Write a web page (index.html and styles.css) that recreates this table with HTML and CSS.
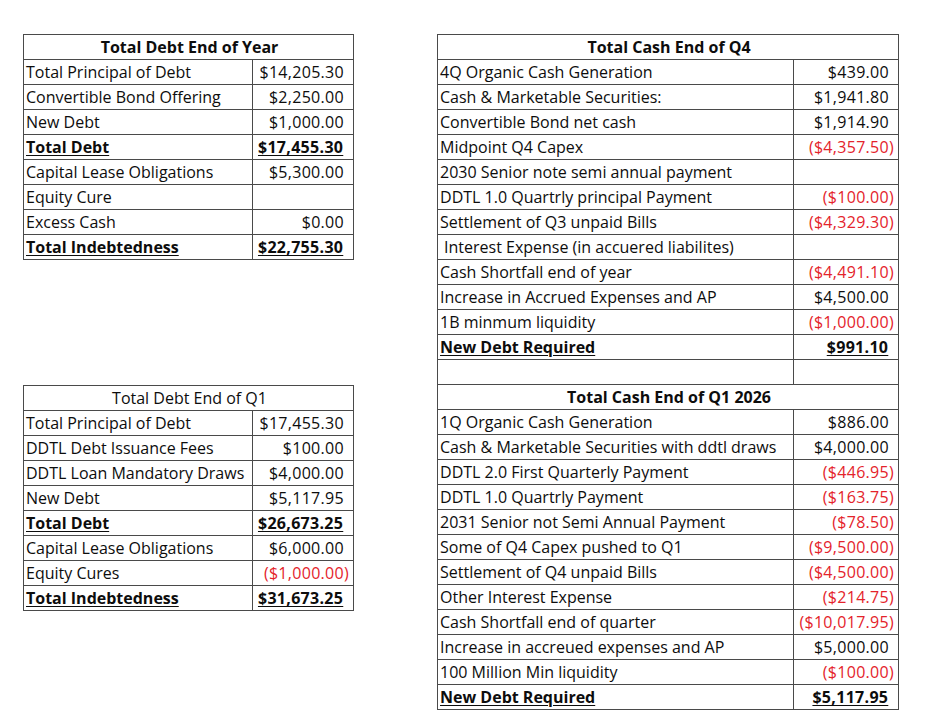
FILE: index.html
```html
<!DOCTYPE html>
<html>
<head>
<meta charset="utf-8">
<title>Debt and Cash Summary</title>
<link rel="stylesheet" href="styles.css">
</head>
<body>
<main class="page">
  <section class="left-col">
    <table class="sheet debt">
      <colgroup><col class="lbl"><col class="val"></colgroup>
      <tr><th colspan="2" class="head bold">Total Debt End of Year</th></tr>
      <tr><td>Total Principal of Debt</td><td class="num">$14,205.30<span class="pad">)</span></td></tr>
      <tr><td>Convertible Bond Offering</td><td class="num">$2,250.00<span class="pad">)</span></td></tr>
      <tr><td>New Debt</td><td class="num">$1,000.00<span class="pad">)</span></td></tr>
      <tr class="total"><td><u>Total Debt</u></td><td class="num"><u>$17,455.30</u><span class="pad">)</span></td></tr>
      <tr><td>Capital Lease Obligations</td><td class="num">$5,300.00<span class="pad">)</span></td></tr>
      <tr><td>Equity Cure</td><td class="num"></td></tr>
      <tr><td>Excess Cash</td><td class="num">$0.00<span class="pad">)</span></td></tr>
      <tr class="total"><td><u>Total Indebtedness</u></td><td class="num"><u>$22,755.30</u><span class="pad">)</span></td></tr>
    </table>

    <table class="sheet debt">
      <colgroup><col class="lbl"><col class="val"></colgroup>
      <tr><th colspan="2" class="head">Total Debt End of Q1</th></tr>
      <tr><td>Total Principal of Debt</td><td class="num">$17,455.30<span class="pad">)</span></td></tr>
      <tr><td>DDTL Debt Issuance Fees</td><td class="num">$100.00<span class="pad">)</span></td></tr>
      <tr><td>DDTL Loan Mandatory Draws</td><td class="num">$4,000.00<span class="pad">)</span></td></tr>
      <tr><td>New Debt</td><td class="num">$5,117.95<span class="pad">)</span></td></tr>
      <tr class="total"><td><u>Total Debt</u></td><td class="num"><u>$26,673.25</u><span class="pad">)</span></td></tr>
      <tr><td>Capital Lease Obligations</td><td class="num">$6,000.00<span class="pad">)</span></td></tr>
      <tr><td>Equity Cures</td><td class="num neg">($1,000.00)</td></tr>
      <tr class="total"><td><u>Total Indebtedness</u></td><td class="num"><u>$31,673.25</u><span class="pad">)</span></td></tr>
    </table>
  </section>

  <section class="right-col">
    <table class="sheet cash">
      <colgroup><col class="lbl"><col class="val"></colgroup>
      <tr><th colspan="2" class="head bold">Total Cash End of Q4</th></tr>
      <tr><td>4Q Organic Cash Generation</td><td class="num">$439.00<span class="pad">)</span></td></tr>
      <tr><td>Cash &amp; Marketable Securities:</td><td class="num">$1,941.80<span class="pad">)</span></td></tr>
      <tr><td>Convertible Bond net cash</td><td class="num">$1,914.90<span class="pad">)</span></td></tr>
      <tr><td>Midpoint Q4 Capex</td><td class="num neg">($4,357.50)</td></tr>
      <tr><td>2030 Senior note semi annual payment</td><td class="num"></td></tr>
      <tr><td>DDTL 1.0 Quartrly principal Payment</td><td class="num neg">($100.00)</td></tr>
      <tr><td>Settlement of Q3 unpaid Bills</td><td class="num neg">($4,329.30)</td></tr>
      <tr><td class="indent">Interest Expense (in accuered liabilites)</td><td class="num"></td></tr>
      <tr><td>Cash Shortfall end of year</td><td class="num neg">($4,491.10)</td></tr>
      <tr><td>Increase in Accrued Expenses and AP</td><td class="num">$4,500.00<span class="pad">)</span></td></tr>
      <tr><td>1B minmum liquidity</td><td class="num neg">($1,000.00)</td></tr>
      <tr class="total"><td><u>New Debt Required</u></td><td class="num"><u>$991.10</u><span class="pad">)</span></td></tr>
      <tr><td></td><td class="num"></td></tr>
      <tr><th colspan="2" class="head bold">Total Cash End of Q1 2026</th></tr>
      <tr><td>1Q Organic Cash Generation</td><td class="num">$886.00<span class="pad">)</span></td></tr>
      <tr><td>Cash &amp; Marketable Securities with ddtl draws</td><td class="num">$4,000.00<span class="pad">)</span></td></tr>
      <tr><td>DDTL 2.0 First Quarterly Payment</td><td class="num neg">($446.95)</td></tr>
      <tr><td>DDTL 1.0 Quartrly Payment</td><td class="num neg">($163.75)</td></tr>
      <tr><td>2031 Senior not Semi Annual Payment</td><td class="num neg">($78.50)</td></tr>
      <tr><td>Some of Q4 Capex pushed to Q1</td><td class="num neg">($9,500.00)</td></tr>
      <tr><td>Settlement of Q4 unpaid Bills</td><td class="num neg">($4,500.00)</td></tr>
      <tr><td>Other Interest Expense</td><td class="num neg">($214.75)</td></tr>
      <tr><td>Cash Shortfall end of quarter</td><td class="num neg">($10,017.95)</td></tr>
      <tr><td>Increase in accreued expenses and AP</td><td class="num">$5,000.00<span class="pad">)</span></td></tr>
      <tr><td>100 Million Min liquidity</td><td class="num neg">($100.00)</td></tr>
      <tr class="total"><td><u>New Debt Required</u></td><td class="num"><u>$5,117.95</u><span class="pad">)</span></td></tr>
    </table>
  </section>
</main>
</body>
</html>
```
FILE: styles.css
```css
html, body {
  margin: 0;
  padding: 0;
  background: #ffffff;
}

.page {
  display: flex;
  align-items: flex-start;
  gap: 83px;
  padding: 34px 0 0 23px;
  font-family: "Open Sans", "Noto Sans", sans-serif;
  font-size: 16px;
  color: #0d0d0d;
}

.left-col {
  display: flex;
  flex-direction: column;
  gap: 125px;
}

.sheet {
  border-collapse: collapse;
  table-layout: fixed;
  border: 1px solid #3c3c3c;
}

.debt { width: 330px; }
.debt .lbl { width: 229px; }
.debt .val { width: 101px; }

.cash { width: 461px; }
.cash .lbl { width: 356px; }
.cash .val { width: 105px; }

.sheet tr { height: 25px; }

.sheet th,
.sheet td {
  border: 1px solid #4a4a4a;
  padding: 0 0 0 2px;
  line-height: 22px;
  white-space: nowrap;
  overflow: hidden;
  vertical-align: middle;
}

.sheet th {
  font-weight: 400;
  text-align: center;
}

.sheet th.bold { font-weight: 700; }

.sheet td.num {
  text-align: right;
  padding: 0 4px 0 0;
  letter-spacing: 0.3px;
}

.pad { visibility: hidden; }

.neg { color: #e4232b; }

.total td { font-weight: 700; }

.total u {
  text-decoration-thickness: 1px;
  text-underline-offset: 2px;
}

.sheet td.indent { padding-left: 6px; }
```
